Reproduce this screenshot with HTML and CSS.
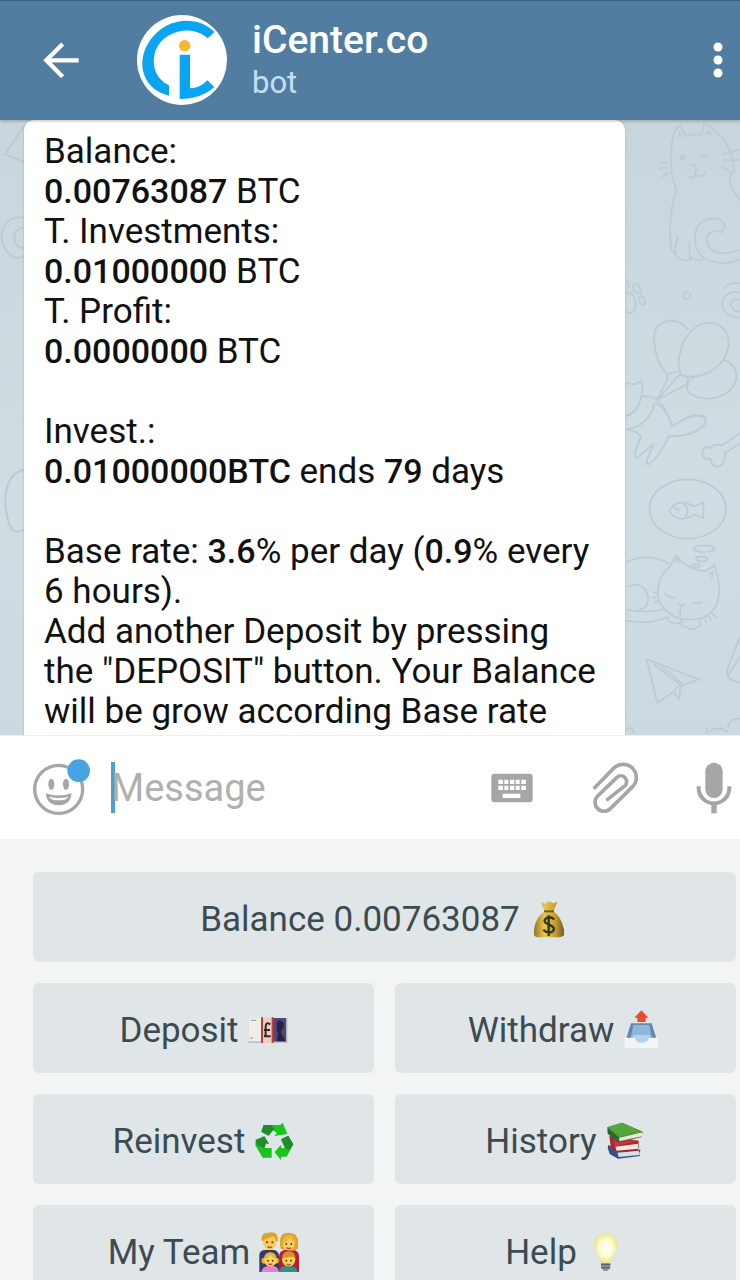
FILE: index.html
```html
<!DOCTYPE html>
<html lang="en">
<head>
<meta charset="utf-8">
<meta name="viewport" content="width=device-width, initial-scale=1">
<title>iCenter.co</title>
<link rel="stylesheet" href="styles.css">
</head>
<body>
<div class="app">
  <header class="topbar">
    <button class="icon-button back" aria-label="Back">
      <svg width="36" height="36" viewBox="0 0 108 108" fill="none" stroke="#fff" stroke-width="13"><path d="M107 55H8M59 6L10 55l49 49"/></svg>
    </button>
    <svg class="avatar" viewBox="0 0 270 270" aria-hidden="true">
      <circle cx="135" cy="135" r="135" fill="#fff"/>
      <path d="M233 51C197 14 137 7 91 31C33 62 4 124 21 178C31 210 60 234 96 242V211C60 195 45 158 52 120C60 80 94 52 138 47C168 45 193 53 212 70Z" fill="#0aa5f2"/>
      <circle cx="143" cy="92" r="17" fill="#f8b82e"/>
      <path d="M128 119h31v101q31-1 52-24l21 20q-40 36-104 36z" fill="#0aa5f2"/>
    </svg>
    <div class="peer">
      <h1 class="peer-name">iCenter.co</h1>
      <p class="peer-status">bot</p>
    </div>
    <button class="icon-button more" aria-label="More options">
      <svg width="10" height="36" viewBox="0 0 10 36" fill="#fff"><circle cx="5" cy="5" r="4.500"/><circle cx="5" cy="18" r="4.500"/><circle cx="5" cy="31" r="4.500"/></svg>
    </button>
  </header>

  <main class="chat">
    <svg class="doodles doodles-left" width="24" height="615" viewBox="0 0 24 615" aria-hidden="true">
      <path d="M24 6L5 34l19 8M24 98C8 94-2 110 3 124s15 16 21 12M24 108c-12-2-14 20 0 20M24 350C8 352 2 374 7 396s12 15 17 14"/>
    </svg>
    <svg class="doodles doodles-right" width="140" height="615" viewBox="0 0 140 615" aria-hidden="true">
      <g transform="translate(0 -120) scale(.3333)">
        <path d="M230 568C208 530 210 460 219 410Q225 385 240 378L258 407Q281 400 304 405L313 370Q350 385 384 439Q400 475 402 515Q380 525 395 565L420 600M230 568C212 620 205 690 215 750Q245 795 275 775Q300 785 310 776M234 710Q222 740 228 768M270 724Q265 760 273 775M235 412l3-11 7 11M321 407l3-12 9 9M302 470q12-12 24 1M268 496l14-2 7 9-3 22q-10 12-20 7M286 525q20 12 32-11M180 490q15-5 27 1M176 506q15-5 30-2M188 532q8-12 20-12M365 464l55-16M368 482l52-3M365 500l30 16"/>
        <circle cx="248" cy="472" r="7"/>
        <path d="M420 750C385 765 330 765 322 730C315 700 335 688 365 696C385 675 370 655 335 656C295 658 280 690 287 735C298 790 370 800 420 778"/>
        <path d="M78 880C100 870 110 900 106 925Q95 945 78 935M78 842q15 10 5 22M100 858c8-20 22 0 22 17-8 14-26-5-22-17M117 892c8-12 22 5 18 20-12 7-20-8-18-20M370 865q20-20 50-15M420 878C385 870 365 890 367 920Q380 955 420 952M420 900c-35-10-38 30 0 36"/>
        <circle cx="261" cy="887" r="11"/>
        <path d="M265 991C235 945 165 955 162 1010Q165 1090 202 1122L235 1113M242 1123C220 1060 265 970 325 968C380 970 405 1020 370 1080C335 1125 280 1140 242 1123M372 1080C410 1090 425 1140 390 1170C350 1210 270 1200 260 1165Q265 1140 285 1130M202 1122l-2 20-30 60 70-80 25 12-5 20-88 45M78 1150l30 3 16-11q10 35-10 75-15 25-36 30M125 1190q45-5 65 30l20 40M250 1260q30-25 70-5"/>
      </g>
      <g transform="translate(0 280) scale(.3333)">
        <path d="M78 88Q145 80 164 8M167 8Q205 30 216 80Q270 40 310 48C335 70 290 110 206 109Q180 170 145 193Q130 195 163 130L110 175Q95 170 123 110Q110 90 78 88M78 50Q110 40 120 0M420 100L366 136Q340 130 335 143Q305 135 307 165Q315 180 332 177Q335 205 362 198Q380 180 374 160L420 130"/>
        <ellipse cx="263" cy="327" rx="115" ry="89"/>
        <path d="M207 332Q235 290 281 320L310 307V354L281 343Q235 375 207 332M250 311q25 22 3 42M220 323l20 8"/>
        <ellipse cx="312" cy="446" rx="31" ry="10"/><ellipse cx="305" cy="477" rx="17" ry="7"/><ellipse cx="289" cy="496" rx="11" ry="5"/>
        <path d="M78 486Q150 455 208 492M210 500L227 466L253 492Q285 510 315 514L344 496Q365 560 353 605Q330 665 265 658C220 660 175 625 173 580Q175 525 210 500M78 630Q150 640 190 628M78 662Q150 675 205 650M85 560Q130 540 145 590Q145 625 115 632M195 580q12 15 30 12M280 608q12 5 27-2M232 608l10 8 14-3M242 616l-2 35M160 577l12 3M155 592l15 2M162 608l12-5M203 651q0 18 18 17 15 8 22-6M247 660q-10 20 14 22 15 12 28 0 18-2 9-20M315 658l5 10M325 650l10 12M337 642l12 11M225 490l5-13 10 12M325 525l14-9-3 20"/>
        <path d="M140 778L296 838L241 858L238 896L220 876L172 908Z M160 792L232 846L241 858M180 795L248 852M220 876l12-15"/>
        <path d="M420 710L383 805Q375 830 395 840L420 848M420 770l-35 55M330 995q20-20 55 2M385 985q-5-25 35-30M78 990q18-15 26 12M320 982v20"/>
      </g>
    </svg>
    <article class="bubble">
      <p>Balance:<br><b>0.00763087</b> BTC<br>T. Investments:<br><b>0.01000000</b> BTC<br>T. Profit:<br><b>0.0000000</b> BTC</p>
      <p>Invest.:<br><b>0.01000000BTC</b> ends <b>79</b> days</p>
      <p>Base rate: <b>3.6</b>% per day (<b>0.9</b>% every<br>6 hours).<br>Add another Deposit by pressing<br>the "DEPOSIT" button. Your Balance<br>will be grow according Base rate</p>
    </article>
  </main>

  <form class="composer">
    <button type="button" class="icon-button emoji" aria-label="Emoji">
      <svg width="58" height="58" viewBox="0 0 174 174">
        <circle cx="77" cy="91" r="72" fill="none" stroke="#a6a6a6" stroke-width="10"/>
        <ellipse cx="55" cy="76" rx="9" ry="17" fill="#a6a6a6"/><ellipse cx="99" cy="76" rx="9" ry="17" fill="#a6a6a6"/>
        <path d="M38 103Q77 116 116 103Q112 139 77 139Q42 139 38 103Z" fill="#a6a6a6"/><path d="M48 113Q77 121 106 113Q102 124 77 124Q52 124 48 113Z" fill="#fff"/>
        <circle cx="137" cy="35" r="34" fill="#48a3e2"/>
      </svg>
    </button>
    <span class="caret"></span>
    <input class="message-input" type="text" placeholder="Message" aria-label="Message">
    <button type="button" class="icon-button" aria-label="Bot keyboard">
      <svg width="42" height="30" viewBox="0 0 126 90"><rect x="1" y="2" width="124" height="86" rx="9" fill="#a6a6a6"/><path fill="#fff" d="M22 20h14v13H22zM40 20h12v13H40zM57 20h13v13H57zM74 20h12v13H74zM91 20h14v13H91zM22 38h14v13H22zM40 38h12v13H40zM57 38h13v13H57zM74 38h12v13H74zM91 38h14v13H91zM35 62h53v13H35z"/></svg>
    </button>
    <button type="button" class="icon-button attach" aria-label="Attach">
      <svg width="46" height="52" viewBox="0 0 138 156" fill="none" stroke="#a6a6a6" stroke-width="11"><path d="M5 80L65 19A39 39 0 0 1 122 74L55 140A26 26 0 0 1 17 102L74 47A17 17 0 0 1 99 71L43 115"/></svg>
    </button>
    <button type="button" class="icon-button" aria-label="Record voice message">
      <svg width="36" height="52" viewBox="0 0 108 156"><rect x="28" y="2" width="52" height="106" rx="26" fill="#a6a6a6"/><path d="M8 73v5a46 46 0 0 0 92 0v-5" fill="none" stroke="#a6a6a6" stroke-width="12"/><path d="M46 124h16v30H46z" fill="#a6a6a6"/></svg>
    </button>
  </form>

  <nav class="keyboard" aria-label="Bot keyboard">
    <button class="key wide">Balance 0.00763087
      <svg class="glyph" viewBox="0 0 120 120"><defs><linearGradient id="gold"><stop stop-color="#9a7626"/><stop offset=".35" stop-color="#e6c64b"/><stop offset=".7" stop-color="#c9a132"/><stop offset="1" stop-color="#795a20"/></linearGradient></defs><path d="M36 9l12 5 12-7 12 6 13-5-11 29q22 16 31 54v17q-4 7-20 7H33q-16 0-18-7V91q6-37 32-54z" fill="url(#gold)"/><path d="M45 37h30" stroke="#775824" stroke-width="6"/><path d="M76 61Q61 49 49 60C37 77 75 75 75 90C71 106 51 101 43 92M59 49v62" fill="none" stroke="#31371f" stroke-width="7"/></svg>
    </button>
    <button class="key">Deposit
      <svg class="glyph" viewBox="0 0 120 120"><path d="M1 24h117v74H1z" fill="#b7b5bb"/><path d="M1 24h42v70H1z" fill="#efeeed"/><path d="M74 24h40v70H74z" fill="#514675"/><path d="M91 31q22 1 15 25-11 5-4 18l12 20H86l4-25q-9-20 1-38" fill="#292246"/><path d="M43 22h31v77H43z" fill="#e7d1c5"/><path d="M42 22v77M74 22v77" stroke="#c63b36" stroke-width="6"/><path d="M67 43q-14-9-14 7v23q0 6-5 6h20M48 60h18" fill="none" stroke="#342720" stroke-width="6"/><path d="M8 31h17M7 84h8" stroke="#aaa" stroke-width="4"/></svg>
    </button>
    <button class="key">Withdraw
      <svg class="glyph" viewBox="0 0 120 120"><path d="M24 40h62l15 48H9z" fill="#6687aa"/><path d="M31 45h48l9 43H22z" fill="#8fb7dc"/><path d="M29 75h54L71 99H41z" fill="#b4d1ed"/><path d="M5 83h31q2 15 20 15t22-15h27v27q-2 4-7 4H12q-6 0-7-4z" fill="#f2f5f8"/><path d="M55 1l21 22h-8v13H43V23H34z" fill="#e84b2e"/></svg>
    </button>
    <button class="key">Reinvest
      <svg class="glyph" viewBox="0 0 120 120"><path d="M29 12h50l7-7 14 34-39 6 8-9-13-9-12 17-22-12z" fill="#16c51d"/><path d="M29 12h23l9 11-17 21-22-12z" fill="#238b2b"/><path d="M5 57l26-11 14 23-9-2-5 14h22v29H26L4 73z" fill="#16c51d"/><path d="M5 57l26-11 14 23-9-2-5 14-22-9z" fill="#238b2b"/><path d="M81 55l22-11 15 26-20 37H81v11L62 94l19-23v10h12z" fill="#16c51d"/><path d="M81 55l22-11 15 26-11 17-14-6z" fill="#238b2b"/></svg>
    </button>
    <button class="key">History
      <svg class="glyph" viewBox="0 0 120 120"><path d="M7 72l24 10 73 4-4 11 2 8-66 8-25-14-6-18z" fill="#354f80"/><path d="M34 95l64-6 3 13-63 6z" fill="#d8e0e4"/><path d="M10 45l88 14v19l-3 11-67 3-14-16z" fill="#ad2637"/><path d="M28 77l68-9v15l-64 6z" fill="#eee9dc"/><path d="M24 55l71 5-68 15z" fill="#e32c35"/><path d="M4 19L48 5l62 27-4 16-69 17L5 38z" fill="#2f682b"/><path d="M39 50l69-16v12L40 61z" fill="#e8e8d6"/><path d="M4 19L48 5l62 27-71 17z" fill="#55a639"/></svg>
    </button>
    <button class="key">My Team
      <svg class="glyph" viewBox="0 0 120 120"><path d="M1 120V68q2-14 18-14h26q15 3 15 20v46z" fill="#34396f"/><path d="M60 120V74q1-18 17-20h27q16 2 16 20v46z" fill="#b91d30"/><path d="M65 50Q55 0 89 2q36 0 27 48-10 12-51 0z" fill="#e1a12d"/><path d="M9 27Q3 3 28 2q31-6 28 26z" fill="#d89b27"/><ellipse cx="32" cy="31" rx="20" ry="23" fill="#f9ca56"/><path d="M11 25Q10 2 31 3q23-1 22 22-5-9-11-12-16 7-31 12" fill="#dfa62e"/><ellipse cx="89" cy="34" rx="18" ry="21" fill="#ffcf63"/><path d="M70 35Q70 8 95 8q13 6 14 24-11-5-17-14-7 12-22 17" fill="#eab63e"/><path d="M7 120q3-20 29-19 22 0 24 19z" fill="#df83ca"/><path d="M60 120q4-20 30-19 24 0 25 19z" fill="#30927e"/><circle cx="16" cy="86" r="9" fill="#eca937"/><circle cx="51" cy="86" r="9" fill="#eca937"/><circle cx="34" cy="84" r="19" fill="#ffd45f"/><path d="M15 81q1-20 19-20t19 20q-12-3-18-13-8 11-20 13" fill="#e8b33b"/><circle cx="89" cy="83" r="20" fill="#ffcf58"/><path d="M69 80q0-22 20-22t21 22q-10-12-41 0" fill="#d4942b"/><g fill="#573b25"><circle cx="24" cy="31" r="3"/><circle cx="40" cy="31" r="3"/><circle cx="82" cy="36" r="3"/><circle cx="97" cy="36" r="3"/><circle cx="27" cy="86" r="3"/><circle cx="41" cy="86" r="3"/><circle cx="82" cy="86" r="3"/><circle cx="96" cy="86" r="3"/></g><path d="M26 44q7 5 13 0M83 47q7 5 13 0M28 95q6 5 12 0M83 96q6 5 12 0" stroke="#ad4938" stroke-width="4" fill="none"/></svg>
    </button>
    <button class="key">Help
      <svg class="glyph" viewBox="0 0 120 120"><defs><radialGradient id="glow"><stop stop-color="#fffff8"/><stop offset=".55" stop-color="#fffdd5"/><stop offset="1" stop-color="#ece58f"/></radialGradient></defs><path d="M45 91h28v17l-9 9H54l-9-9z" fill="#929595"/><path d="M45 98h28M46 107h26" stroke="#5d6263" stroke-width="4"/><path d="M59 3C35 3 23 19 24 39C25 60 41 67 43 93H75C77 67 94 59 95 39C95 19 82 3 59 3Z" fill="url(#glow)"/></svg>
    </button>
  </nav>
</div>
</body>
</html>
```
FILE: styles.css
```css
* {
  box-sizing: border-box;
}

body {
  margin: 0;
  font-family: Roboto, "Noto Sans", sans-serif;
}

h1,
p {
  margin: 0;
}

button {
  font: inherit;
  border: 0;
  padding: 0;
  cursor: pointer;
}

svg {
  display: block;
}

.app {
  display: flex;
  flex-direction: column;
  height: 100vh;
  overflow: hidden;
}

.icon-button {
  flex: none;
  background: none;
}

.topbar {
  position: relative;
  z-index: 1;
  flex: none;
  display: flex;
  align-items: center;
  height: 120px;
  padding: 0 17px 1px 43px;
  background: #507da0;
  box-shadow: inset 0 1px #365f80, 0 1px 3px #0004;
  color: #fff;
}

.avatar {
  flex: none;
  width: 90px;
  height: 90px;
  margin: 0 25px 0 58px;
}

.peer {
  flex: 1;
  padding-top: 2px;
}

.peer-name {
  font-size: 39px;
  line-height: 44px;
  font-weight: 500;
}

.peer-status {
  font-size: 31px;
  line-height: 42px;
  color: #c5e0f5;
}

.chat {
  position: relative;
  flex: 1;
  min-height: 0;
  overflow: hidden;
  padding: 0 24px;
  background: linear-gradient(#c8d5dd, #d0dde3 60%, #ccd9e1);
}

.doodles {
  position: absolute;
  top: 0;
  fill: none;
  stroke: #bacbd2;
  stroke-width: 2;
}

.doodles g {
  stroke-width: 5;
}

.doodles-left {
  left: 0;
}

.doodles-right {
  right: 0;
}

.bubble {
  position: relative;
  max-width: 601px;
  min-height: 100%;
  padding: 12px 20px;
  background: #fff;
  border-radius: 10px 10px 0 0;
  box-shadow: 0 0 2px #8fa7b3;
  color: #111;
  font-size: 35px;
  line-height: 40px;
}

.bubble p + p {
  margin-top: 40px;
}

.bubble b {
  font-size: 34px;
  line-height: 1;
  font-weight: 500;
}

.composer {
  flex: none;
  display: flex;
  align-items: center;
  height: 104px;
  padding: 0 8px 0 33px;
  background: #fff;
  border-top: 1px solid #eceff0;
}

.caret {
  flex: none;
  width: 4px;
  height: 51px;
  margin: 0 -4px 0 20px;
  background: #4b9fd5;
}

.message-input {
  flex: 1;
  min-width: 0;
  padding: 0;
  border: 0;
  outline: 0;
  background: none;
  font: 38px/48px Roboto, "Noto Sans", sans-serif;
}

.message-input::placeholder {
  color: #b0b0b0;
  opacity: 1;
}

.attach {
  margin: 0 58px 0 59px;
}

.keyboard {
  flex: none;
  display: grid;
  grid-template-columns: 1fr 1fr;
  grid-auto-rows: 90px;
  gap: 21px;
  height: 441px;
  padding: 33px 4px 0 33px;
  overflow: hidden;
  background: #f3f5f4;
}

.key {
  display: flex;
  align-items: center;
  justify-content: center;
  gap: 9px;
  padding-top: 4px;
  border-radius: 6px;
  background: #e0e6e7;
  color: #3b4b52;
  font-size: 35px;
}

.wide {
  grid-column: 1 / -1;
}

.glyph {
  width: 40px;
  height: 40px;
}
```
